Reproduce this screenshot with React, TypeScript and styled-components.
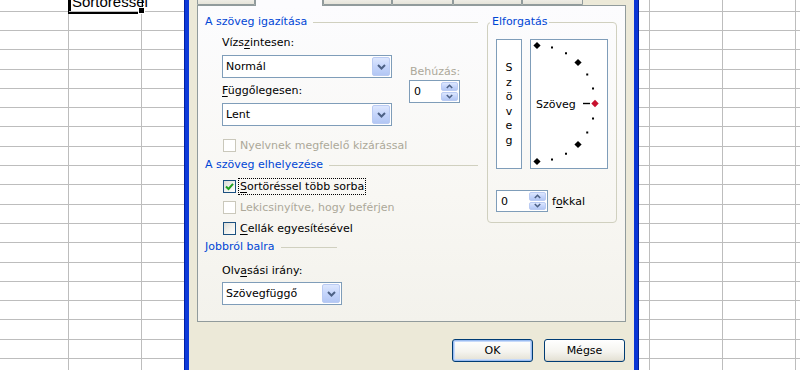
import React from "react";
import styled, { createGlobalStyle } from "styled-components";

const GlobalStyle = createGlobalStyle`
  html, body {
    margin: 0;
    padding: 0;
  }
  body {
    width: 800px;
    height: 370px;
    overflow: hidden;
    background: #ffffff;
    font-family: "DejaVu Sans", "Liberation Sans", sans-serif;
  }
`;

const Screen = styled.div`
  position: relative;
  width: 800px;
  height: 370px;
  overflow: hidden;
  background: #ffffff;
  font-family: "DejaVu Sans", "Liberation Sans", sans-serif;
  font-size: 11px;
  color: #000;
`;

/* ---------- spreadsheet behind the dialog ---------- */

const Sheet = styled.div`
  display: grid;
  grid-template-columns: 69px repeat(11, 72.67px);
  grid-template-rows: 11.7px repeat(19, 19.3px);
`;

const Cell = styled.div<{ $active?: boolean }>`
  position: relative;
  box-sizing: border-box;
  border-right: 1px solid #bdbdbd;
  border-bottom: 1px solid #bdbdbd;
  display: flex;
  align-items: flex-end;
  overflow: visible;
  z-index: ${({ $active }) => ($active ? 1 : 0)};
  box-shadow: ${({ $active }) => ($active ? "inset 2px 0 0 #000, 0 1px 0 1px #000" : "none")};
`;

const CellText = styled.span`
  font-family: "Liberation Sans", Arial, sans-serif;
  font-size: 15px;
  line-height: 15px;
  padding-left: 3px;
  margin-bottom: 2px;
  white-space: nowrap;
`;

const FillHandle = styled.span`
  position: absolute;
  right: -4px;
  bottom: -3px;
  width: 5px;
  height: 5px;
  background: #000;
  border: 1px solid #fff;
`;

/* ---------- dialog ---------- */

const Dialog = styled.div`
  position: absolute;
  left: 185px;
  top: -20px;
  width: 453px;
  height: 420px;
  box-sizing: border-box;
  border: 4px solid #0a35d4;
  border-top: none;
  border-left-color: #0d3ad8;
  box-shadow: -1px 0 0 #0020a8, 1px 0 0 #001e96;
  background: #ece9d8;
  padding: 4px 8px 0 8px;
  display: flex;
  flex-direction: column;
`;

const TabStrip = styled.div`
  position: relative;
  z-index: 2;
  display: flex;
  align-items: flex-end;
  height: 21px;
`;

const Tab = styled.div<{ $width: number; $selected?: boolean }>`
  box-sizing: border-box;
  width: ${({ $width }) => $width}px;
  height: ${({ $selected }) => ($selected ? 22 : 19)}px;
  margin-bottom: ${({ $selected }) => ($selected ? -1 : 0)}px;
  padding-top: ${({ $selected }) => ($selected ? 3 : 1)}px;
  border: 1px solid #919b9c;
  border-bottom: ${({ $selected }) => ($selected ? "none" : "1px solid #919b9c")};
  border-radius: 3px 3px 0 0;
  background: ${({ $selected }) =>
    $selected ? "#fcfcfe" : "linear-gradient(180deg, #fefefe 0%, #f4f3ee 60%, #e6e4da 100%)"};
  text-align: center;
  line-height: 13px;
  white-space: nowrap;
  overflow: hidden;
`;

const Panel = styled.div`
  position: relative;
  z-index: 1;
  box-sizing: border-box;
  height: 317px;
  border: 1px solid #919b9c;
  background: linear-gradient(180deg, #fcfcfe 0%, #f8f7f3 60%, #f3f2ec 100%);
  padding: 9px 8px 0 7px;
  display: grid;
  grid-template-columns: 273px 130px;
  column-gap: 9px;
  align-items: start;
`;

const Column = styled.div`
  display: flex;
  flex-direction: column;
`;

const SectionHeader = styled.div<{ $width?: number; $gap?: number }>`
  display: flex;
  align-items: center;
  gap: 6px;
  height: 14px;
  line-height: 14px;
  width: ${({ $width }) => ($width ? `${$width}px` : "auto")};
  margin-top: ${({ $gap }) => $gap ?? 0}px;
  color: #0046d5;
  white-space: nowrap;

  &::after {
    content: "";
    flex: 1;
    height: 1px;
    background: #d0d0bf;
  }
`;

const Indent = styled.div`
  display: flex;
  flex-direction: column;
  padding-left: 17px;
`;

const TopFields = styled.div`
  display: flex;
  gap: 17px;
  margin-top: 7px;
`;

const FieldStack = styled.div`
  display: flex;
  flex-direction: column;
`;

const FieldLabel = styled.div<{ $disabled?: boolean; $gap?: number }>`
  height: 14px;
  line-height: 14px;
  margin-top: ${({ $gap }) => $gap ?? 0}px;
  margin-bottom: 5px;
  color: ${({ $disabled }) => ($disabled ? "#aca899" : "#000")};
  white-space: nowrap;
`;

const IndentBox = styled.div`
  display: flex;
  flex-direction: column;
  padding-top: 29px;

  ${FieldLabel} {
    margin-bottom: 1px;
    margin-left: 1px;
  }
`;

const Combo = styled.div<{ $width: number }>`
  box-sizing: border-box;
  width: ${({ $width }) => $width}px;
  height: 23px;
  border: 1px solid #7f9db9;
  background: #fff;
  display: flex;
  align-items: center;
  justify-content: space-between;
  padding: 0 1px 0 3px;
`;

const DropButton = styled.span`
  box-sizing: border-box;
  width: 18px;
  height: 19px;
  border: 1px solid #bacbf3;
  border-radius: 2px;
  background: linear-gradient(180deg, #dde7fe 0%, #c5d5fb 50%, #b3c7f4 100%);
  display: flex;
  align-items: center;
  justify-content: center;
`;

const Spinner = styled.div<{ $width: number; $height: number }>`
  box-sizing: border-box;
  width: ${({ $width }) => $width}px;
  height: ${({ $height }) => $height}px;
  border: 1px solid #7f9db9;
  background: #fff;
  display: flex;
  align-items: center;
  justify-content: space-between;
  padding: 1px 1px 1px 4px;
`;

const SpinButtons = styled.span`
  display: flex;
  flex-direction: column;
  gap: 1px;
  width: 17px;
  height: 100%;
`;

const SpinButton = styled.span`
  flex: 1;
  box-sizing: border-box;
  border: 1px solid #bacbf3;
  border-radius: 2px;
  background: linear-gradient(180deg, #dde7fe 0%, #c5d5fb 50%, #b3c7f4 100%);
  display: flex;
  align-items: center;
  justify-content: center;
`;

const CheckRow = styled.div<{ $height: number; $gap?: number; $disabled?: boolean }>`
  display: flex;
  align-items: center;
  height: ${({ $height }) => $height}px;
  margin-top: ${({ $gap }) => $gap ?? 0}px;
  padding-left: 1px;
  color: ${({ $disabled }) => ($disabled ? "#aca899" : "#000")};
  white-space: nowrap;
`;

const CheckBox = styled.span<{ $disabled?: boolean }>`
  box-sizing: border-box;
  width: 13px;
  height: 13px;
  border: 1px solid ${({ $disabled }) => ($disabled ? "#cac8bb" : "#1c5180")};
  background: ${({ $disabled }) =>
    $disabled ? "#fff" : "linear-gradient(135deg, #dcdcd7 0%, #f4f4f0 60%, #ffffff 100%)"};
  display: flex;
  align-items: center;
  justify-content: center;
`;

const CheckLabel = styled.span<{ $focused?: boolean }>`
  box-sizing: border-box;
  height: 17px;
  line-height: 15px;
  margin-left: 2px;
  padding: 0 1px;
  border: 1px dotted ${({ $focused }) => ($focused ? "#000" : "transparent")};
`;

const ReadingLabel = styled(FieldLabel)`
  margin-top: 10px;
  margin-bottom: 4px;
`;

/* ---------- rotation group ---------- */

const Rotation = styled.fieldset`
  margin: 0;
  min-width: 0;
  padding: 10px 8px 10px 8px;
  border: 1px solid #d0d0bf;
  border-radius: 4px;
`;

const RotationLegend = styled.legend`
  margin-left: -6px;
  padding: 0 2px;
  color: #0046d5;
  line-height: 14px;
`;

const OrientRow = styled.div`
  display: flex;
  gap: 8px;
`;

const VerticalText = styled.div`
  box-sizing: border-box;
  width: 26px;
  height: 130px;
  border: 1px solid #7f9db9;
  background: #fff;
  display: flex;
  flex-direction: column;
  align-items: center;
  padding-top: 21px;
  line-height: 14.5px;
`;

const DialBox = styled.div`
  box-sizing: border-box;
  width: 78px;
  height: 130px;
  border: 1px solid #7f9db9;
  background: #fff;
`;

const DegreeRow = styled.div`
  display: flex;
  align-items: center;
  gap: 4px;
  margin-top: 21px;
`;

/* ---------- buttons ---------- */

const ButtonRow = styled.div`
  display: flex;
  justify-content: flex-end;
  gap: 11px;
  margin-top: 17px;
  padding-right: 1px;
`;

const XPButton = styled.button<{ $default?: boolean }>`
  box-sizing: border-box;
  width: 81px;
  height: 23px;
  border: 1px solid #003c74;
  border-radius: 3px;
  background: linear-gradient(180deg, #ffffff 0%, #f5f4ef 55%, #e3e0d3 100%);
  box-shadow: ${({ $default }) =>
    $default ? "inset 0 0 0 1px #9bbcf0, inset 0 0 0 2px #c7dafa" : "inset 0 -1px 0 #d6d0c5"};
  font-family: "DejaVu Sans", "Liberation Sans", sans-serif;
  font-size: 11px;
  color: #000;
  padding: 0;
`;

const Key = styled.span`
  text-decoration: underline;
  text-underline-offset: 2px;
`;

/* ---------- drawings ---------- */

const Chevron = ({ up }: { up?: boolean }) => (
  <svg width="9" height="6" viewBox="0 0 9 6">
    <polyline
      points={up ? "1,5 4.5,1.5 8,5" : "1,1 4.5,4.5 8,1"}
      fill="none"
      stroke="#4d6185"
      strokeWidth="2"
    />
  </svg>
);

const SmallChevron = ({ up }: { up?: boolean }) => (
  <svg width="7" height="5" viewBox="0 0 7 5">
    <polyline
      points={up ? "0.8,4 3.5,1.3 6.2,4" : "0.8,1 3.5,3.7 6.2,1"}
      fill="none"
      stroke="#4d6185"
      strokeWidth="1.6"
    />
  </svg>
);

const CheckMark = () => (
  <svg width="9" height="9" viewBox="0 0 9 9">
    <polyline points="1,4.5 3.5,7 8,1.8" fill="none" stroke="#21a121" strokeWidth="2" />
  </svg>
);

const Dial = () => {
  const cx = 6;
  const cy = 63.5;
  const r = 58;
  const marks = [];
  for (let a = -90; a <= 90; a += 15) {
    const rad = (a * Math.PI) / 180;
    const x = cx + r * Math.cos(rad);
    const y = cy + r * Math.sin(rad);
    if (a === 0) continue;
    if (a % 45 === 0) {
      marks.push(
        <polygon
          key={a}
          points={`${x},${y - 3.6} ${x + 3.6},${y} ${x},${y + 3.6} ${x - 3.6},${y}`}
          fill="#000"
        />
      );
    } else {
      marks.push(<rect key={a} x={x - 1} y={y - 1} width="2" height="2" fill="#000" />);
    }
  }
  return (
    <svg width="76" height="128" viewBox="0 0 76 128">
      {marks}
      <text
        x="5"
        y="67.5"
        fontFamily="DejaVu Sans, Liberation Sans, sans-serif"
        fontSize="11"
        fill="#000"
      >
        Szöveg
      </text>
      <line x1="52" y1="63.5" x2="59" y2="63.5" stroke="#000" strokeWidth="1.4" />
      <polygon points={`64,59.8 67.7,63.5 64,67.2 60.3,63.5`} fill="#c8102e" />
    </svg>
  );
};

const tabs = [
  { label: "Szám", width: 58 },
  { label: "Igazítás", width: 68, selected: true },
  { label: "Betűtípus", width: 69 },
  { label: "Szegély", width: 61 },
  { label: "Mintázat", width: 69 },
  { label: "Védelem", width: 61 },
];

const COLS = 12;
const ROWS = 20;

export default function App() {
  const cells = [];
  for (let r = 0; r < ROWS; r++) {
    for (let c = 0; c < COLS; c++) {
      const active = r === 0 && c === 1;
      cells.push(
        <Cell key={`${r}-${c}`} $active={active}>
          {active && (
            <>
              <CellText>Sortöréssel</CellText>
              <FillHandle />
            </>
          )}
        </Cell>
      );
    }
  }

  return (
    <Screen>
      <GlobalStyle />
      <Sheet>{cells}</Sheet>

      <Dialog>
        <TabStrip>
          {tabs.map((t) => (
            <Tab key={t.label} $width={t.width} $selected={t.selected}>
              {t.label}
            </Tab>
          ))}
        </TabStrip>

        <Panel>
          <Column>
            <SectionHeader $width={273}>A szöveg igazítása</SectionHeader>
            <Indent>
              <TopFields>
                <FieldStack>
                  <FieldLabel>
                    Vízs<Key>z</Key>intesen:
                  </FieldLabel>
                  <Combo $width={170}>
                    <span>Normál</span>
                    <DropButton>
                      <Chevron />
                    </DropButton>
                  </Combo>
                  <FieldLabel $gap={6}>
                    <Key>F</Key>üggőlegesen:
                  </FieldLabel>
                  <Combo $width={170}>
                    <span>Lent</span>
                    <DropButton>
                      <Chevron />
                    </DropButton>
                  </Combo>
                </FieldStack>
                <IndentBox>
                  <FieldLabel $disabled>Behúzás:</FieldLabel>
                  <Spinner $width={51} $height={23}>
                    <span>0</span>
                    <SpinButtons>
                      <SpinButton>
                        <SmallChevron up />
                      </SpinButton>
                      <SpinButton>
                        <SmallChevron />
                      </SpinButton>
                    </SpinButtons>
                  </Spinner>
                </IndentBox>
              </TopFields>
              <CheckRow $height={16} $gap={11} $disabled>
                <CheckBox $disabled />
                <CheckLabel>Nyelvnek megfelelő kizárással</CheckLabel>
              </CheckRow>
            </Indent>

            <SectionHeader $width={273} $gap={5}>
              A szöveg elhelyezése
            </SectionHeader>
            <Indent>
              <CheckRow $height={21} $gap={4}>
                <CheckBox>
                  <CheckMark />
                </CheckBox>
                <CheckLabel $focused>
                  <Key>S</Key>ortöréssel több sorba
                </CheckLabel>
              </CheckRow>
              <CheckRow $height={21} $disabled>
                <CheckBox $disabled />
                <CheckLabel>Lekicsinyítve, hogy beférjen</CheckLabel>
              </CheckRow>
              <CheckRow $height={21}>
                <CheckBox />
                <CheckLabel>
                  <Key>C</Key>ellák egyesítésével
                </CheckLabel>
              </CheckRow>
            </Indent>

            <SectionHeader $width={132} $gap={1}>
              Jobbról balra
            </SectionHeader>
            <Indent>
              <ReadingLabel>
                Olv<Key>a</Key>sási irány:
              </ReadingLabel>
              <Combo $width={120}>
                <span>Szövegfüggő</span>
                <DropButton>
                  <Chevron />
                </DropButton>
              </Combo>
            </Indent>
          </Column>

          <Rotation>
            <RotationLegend>Elforgatás</RotationLegend>
            <OrientRow>
              <VerticalText>
                {"Szöveg".split("").map((ch, i) => (
                  <span key={i}>{ch}</span>
                ))}
              </VerticalText>
              <DialBox>
                <Dial />
              </DialBox>
            </OrientRow>
            <DegreeRow>
              <Spinner $width={52} $height={22}>
                <span>0</span>
                <SpinButtons>
                  <SpinButton>
                    <SmallChevron up />
                  </SpinButton>
                  <SpinButton>
                    <SmallChevron />
                  </SpinButton>
                </SpinButtons>
              </Spinner>
              <span>
                f<Key>o</Key>kkal
              </span>
            </DegreeRow>
          </Rotation>
        </Panel>

        <ButtonRow>
          <XPButton $default>OK</XPButton>
          <XPButton>Mégse</XPButton>
        </ButtonRow>
      </Dialog>
    </Screen>
  );
}
